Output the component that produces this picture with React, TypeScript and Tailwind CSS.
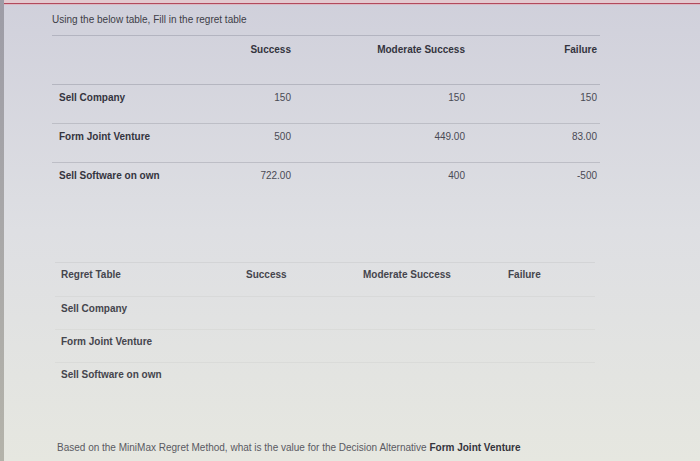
import React from 'react';

const decisions = [
  { name: 'Sell Company', values: ['150', '150', '150'] },
  { name: 'Form Joint Venture', values: ['500', '449.00', '83.00'] },
  { name: 'Sell Software on own', values: ['722.00', '400', '-500'] },
];

const states = ['Success', 'Moderate Success', 'Failure'];

const App: React.FC = () => {
  return (
    <div className="w-[700px] h-[461px] flex overflow-hidden bg-gradient-to-b from-[#d0d0db] via-[#dedfe3] to-[#e6e7e0] font-['Liberation_Sans',Arial,sans-serif] text-[10px] leading-[12px]">
      {/* monitor bezel edge */}
      <div className="w-[4px] shrink-0 bg-gradient-to-b from-[#9d9ca6] to-[#b4b3aa]" />

      <div className="flex-1 flex flex-col">
        <div className="h-[3px] bg-[#e3c9cf]" />
        <div className="h-[1px] bg-[#b2495c]" />
        <div className="h-[1px] bg-[#d9b8c2]" />

        <div className="pl-[48px] flex flex-col">
          <p className="mt-[9px] text-[#3d3d47]">Using the below table, Fill in the regret table</p>

          {/* payoff table */}
          <div className="mt-[9px] w-[548px] border-t border-[#b3b4c0]">
            <div className="grid grid-cols-[150px_92px_174px_132px] h-[49px] border-b border-[#b5b6c0] pt-[8px] font-bold text-[#34343e]">
              <div />
              {states.map(s => (
                <div key={s} className="text-right pr-[3px]">{s}</div>
              ))}
            </div>
            {decisions.map((d, i) => (
              <div
                key={d.name}
                className={`grid grid-cols-[150px_92px_174px_132px] h-[39px] pt-[7px] ${
                  i < decisions.length - 1 ? 'border-b border-[#bdbec6]' : ''
                }`}
              >
                <div className="pl-[7px] font-bold text-[#34343e]">{d.name}</div>
                {d.values.map((v, j) => (
                  <div key={j} className="text-right pr-[3px] text-[#4a4a54]">{v}</div>
                ))}
              </div>
            ))}
          </div>

          {/* regret table */}
          <div className="mt-[60px] ml-[3px] w-[540px] border-t border-[#d3d4d6]">
            <div className="grid grid-cols-[191px_117px_145px_87px] h-[34px] pt-[6px] border-b border-[#d8d9d9] font-bold text-[#45454d]">
              <div className="pl-[6px]">Regret Table</div>
              {states.map(s => (
                <div key={s}>{s}</div>
              ))}
            </div>
            {decisions.map((d, i) => (
              <div
                key={d.name}
                className={`grid grid-cols-[191px_117px_145px_87px] h-[33px] pt-[6px] ${
                  i < decisions.length - 1 ? 'border-b border-[#dadbd9]' : ''
                }`}
              >
                <div className="pl-[6px] font-bold text-[#45454d]">{d.name}</div>
                <div />
                <div />
                <div />
              </div>
            ))}
          </div>

          <p className="mt-[46px] ml-[5px] text-[#5a5a62]">
            Based on the MiniMax Regret Method, what is the value for the Decision Alternative{' '}
            <span className="font-bold text-[#34343c]">Form Joint Venture</span>
          </p>
        </div>
      </div>
    </div>
  );
};

export default App;
